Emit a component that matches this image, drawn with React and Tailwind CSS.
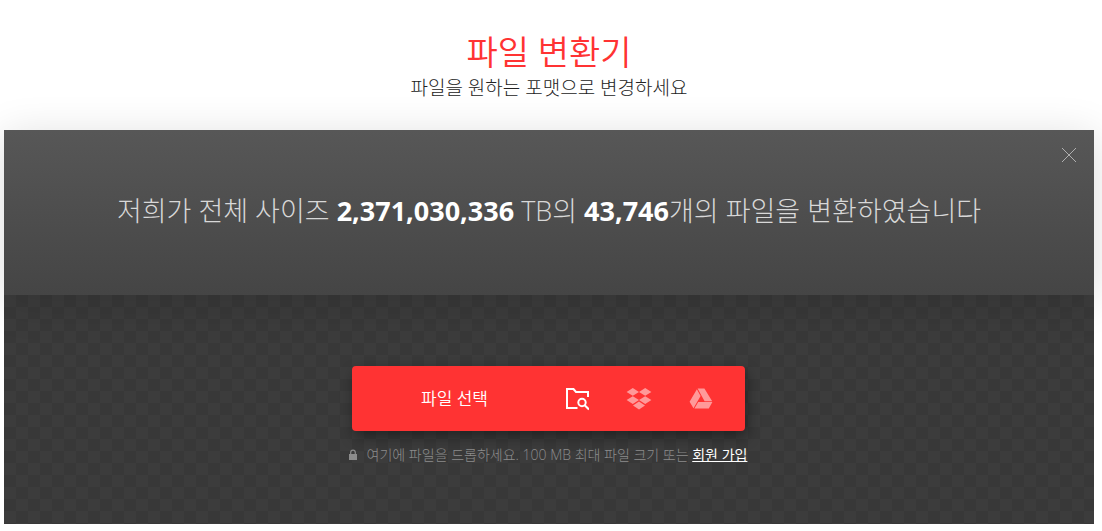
import React, { useState } from 'react';

const SOURCES = [
  { id: 'computer', label: '내 컴퓨터', Icon: FolderSearchIcon, active: true },
  { id: 'dropbox', label: 'Dropbox', Icon: DropboxIcon },
  { id: 'drive', label: 'Google Drive', Icon: DriveIcon },
];

function FolderSearchIcon() {
  return (
    <svg className="w-6 h-6" viewBox="0 0 24 24" fill="none" stroke="currentColor" strokeWidth="2">
      <path d="M12.5 21H2V2H8.5L11 5H23V10" />
      <circle cx="17" cy="15.5" r="3.7" />
      <path d="M19.7 18.2L24 22.5" />
    </svg>
  );
}

function DropboxIcon() {
  return (
    <svg className="w-[26px] h-6" viewBox="0 0 26 24" fill="currentColor">
      <path d="M6.8 1L13 4.9 6.8 8.8 0.6 4.9zM19.2 1L25.4 4.9 19.2 8.8 13 4.9zM6.8 9.2L13 13.1 6.8 17 0.6 13.1zM19.2 9.2L25.4 13.1 19.2 17 13 13.1zM13 14.6L19 18.6 13 22.6 7 18.6z" />
    </svg>
  );
}

function DriveIcon() {
  return (
    <svg className="w-6 h-6" viewBox="0 0 24 24" fill="currentColor">
      <path d="M8.6 1.5H15.4L23.2 14.2H15.6zM7.9 2.2L11.6 8.9 4.5 21.2 0.6 14.8zM9.2 15H23.4L19.8 21.5H5.4z" />
    </svg>
  );
}

function LockIcon() {
  return (
    <svg className="w-2 h-3" viewBox="0 0 8 12">
      <rect x="0" y="5" width="8" height="6" fill="currentColor" />
      <path d="M1.7 5.5V3.5a2.3 2.3 0 0 1 4.6 0v2" fill="none" stroke="currentColor" strokeWidth="1.2" />
    </svg>
  );
}

function StatsBanner({ onClose }) {
  return (
    <div className="relative flex h-[165px] items-center justify-center bg-linear-to-b from-[#575757] to-[#454545] px-8 pb-1 shadow-[0_6px_40px_rgba(0,0,0,0.14)]">
      <p className="text-center text-[27px] leading-9 text-[#d8d8d8]">
        저희가 전체 사이즈 <b className="font-bold text-white">2,371,030,336</b> TB의{' '}
        <b className="font-bold text-white">43,746</b>개의 파일을 변환하였습니다
      </p>
      <button onClick={onClose} aria-label="닫기" className="absolute top-4 right-4 p-0.5 text-[#b0b0b0]">
        <svg className="w-[14px] h-[14px]" viewBox="0 0 14 14" stroke="currentColor" strokeWidth="1">
          <path d="M0 0L14 14M14 0L0 14" />
        </svg>
      </button>
    </div>
  );
}

export default function App() {
  const [showStats, setShowStats] = useState(true);

  return (
    <main className="overflow-hidden bg-white pt-8 pr-2 pb-[7px] pl-1 font-['Open_Sans','Noto_Sans_CJK_KR',sans-serif] font-light">
      <header className="pb-[26px] text-center">
        <h1 className="text-[34px] leading-10 font-[350] text-[#ff3333]">파일 변환기</h1>
        <p className="text-[19px] leading-8 text-[#222222]">파일을 원하는 포맷으로 변경하세요</p>
      </header>

      <section className="bg-[#3c3c3c] bg-[conic-gradient(#383838_25%,#3c3c3c_25%_50%,#383838_50%_75%,#3c3c3c_75%)] bg-size-[24px_24px] bg-position-[0_21px]">
        {showStats && <StatsBanner onClose={() => setShowStats(false)} />}

        <div className="flex flex-col items-center pt-[71px] pr-[18px] pb-[57px] pl-4">
          <div className="flex h-[65px] w-full max-w-[393px] items-center rounded bg-[#ff3333] pr-[13px] shadow-[2px_6px_14px_rgba(0,0,0,0.4)]">
            <button className="flex-1 self-stretch pl-3 text-[17px] font-[350] text-white">파일 선택</button>
            {SOURCES.map(({ id, label, Icon, active }) => (
              <button
                key={id}
                aria-label={label}
                className={`grid h-full w-[62px] place-items-center ${active ? 'text-white' : 'text-[#ff9999]'}`}
              >
                <Icon />
              </button>
            ))}
          </div>

          <div className="mt-3 flex items-center gap-2.5 text-sm leading-6 text-[#8c8c8c]">
            <LockIcon />
            <p>
              여기에 파일을 드롭하세요. 100 MB 최대 파일 크기 또는{' '}
              <a href="#signup" className="font-normal text-white underline">회원 가입</a>
            </p>
          </div>
        </div>
      </section>
    </main>
  );
}
